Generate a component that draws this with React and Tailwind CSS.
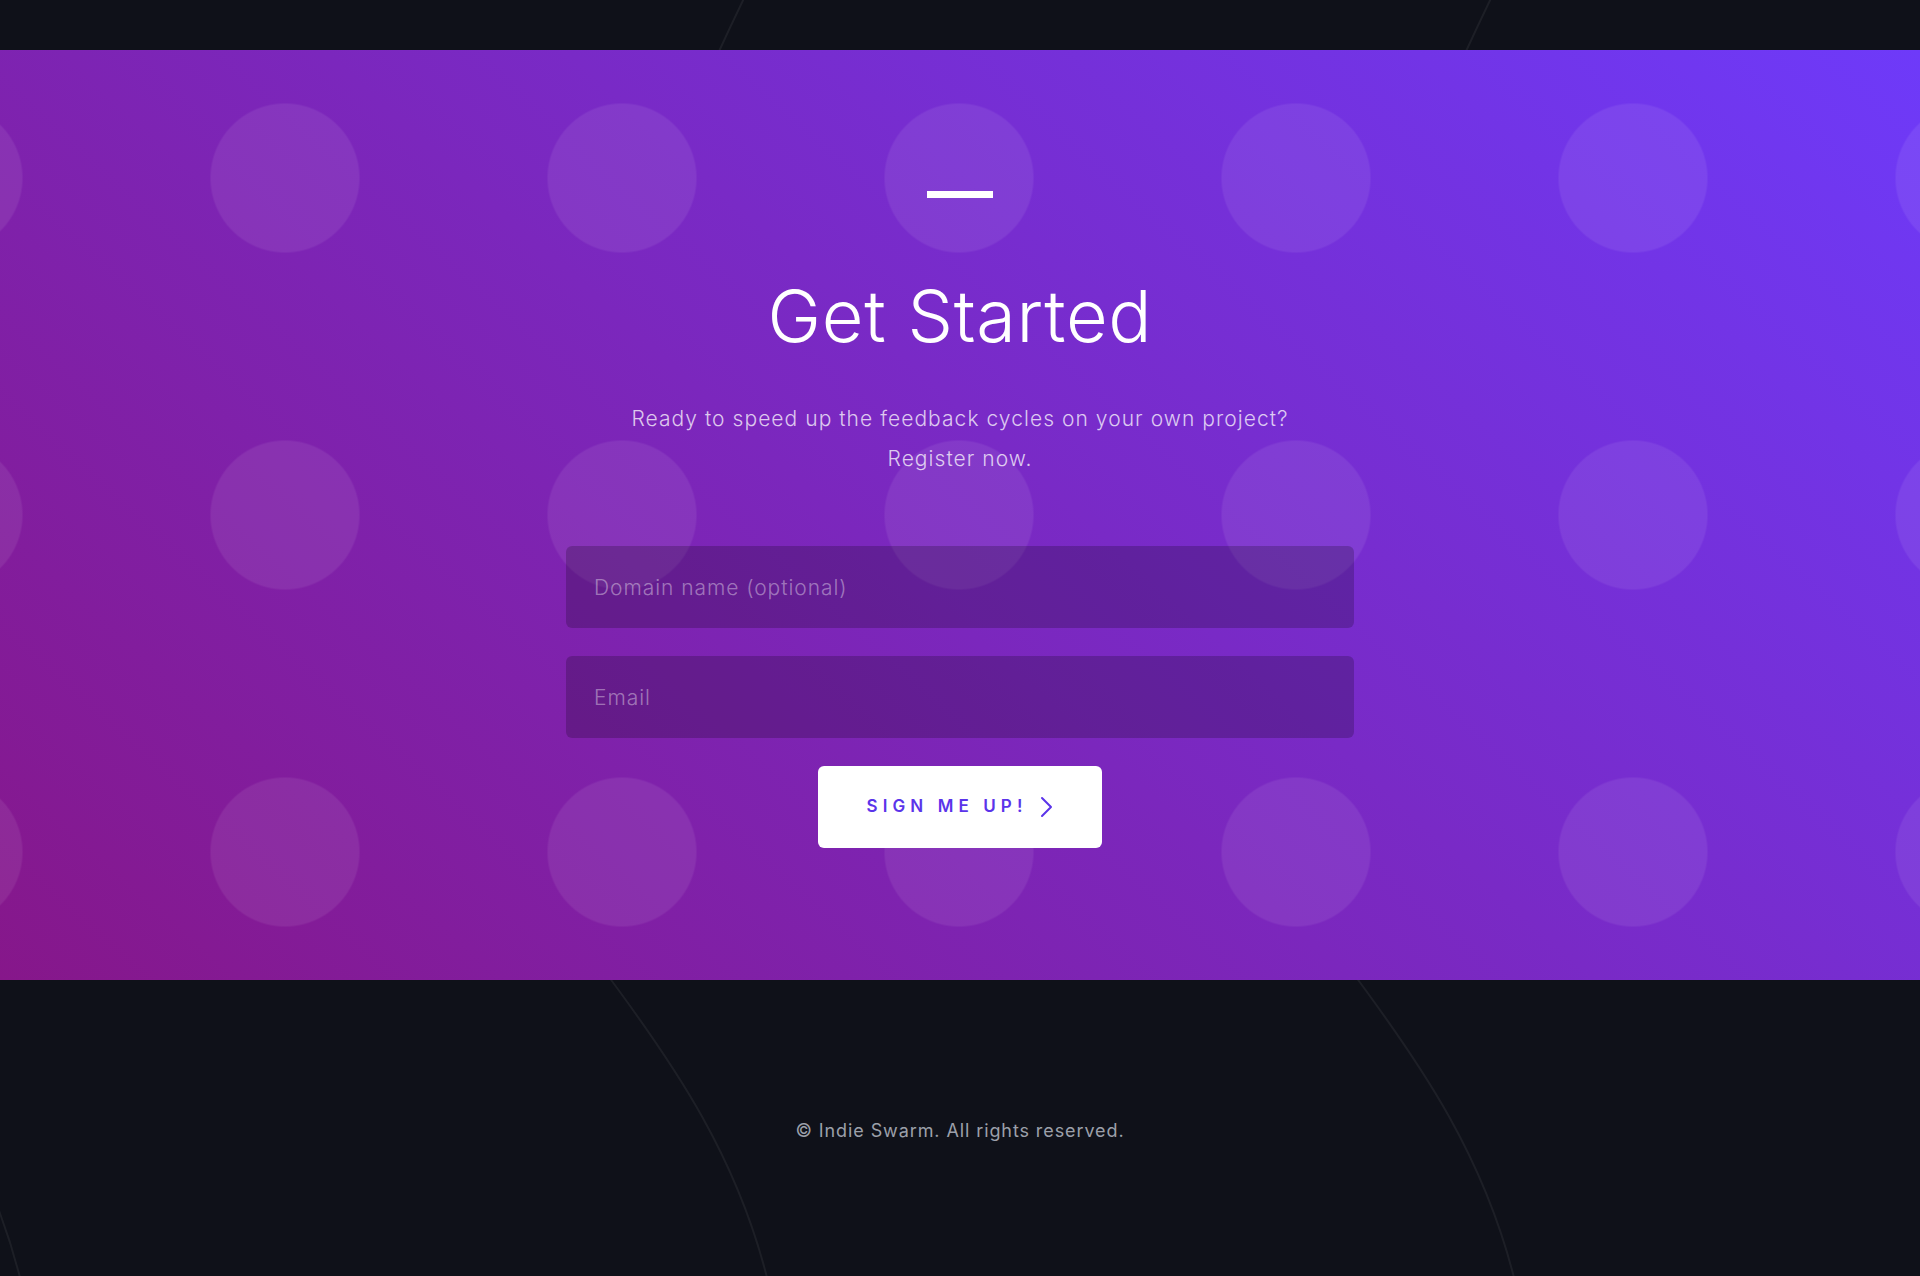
const arcs = [
  "M748 -10 Q731 25 715 60",
  "M1495 -10 Q1478 25 1462 60",
  "M600 965 C675 1065 740 1160 770 1290",
  "M1347 965 C1422 1065 1487 1160 1517 1290",
  "M-147 965 C-72 1065 -7 1160 23 1290",
]

const App = () => {
  return (
    <div className="relative min-h-screen overflow-hidden bg-[#0f1119] font-['Inter','Liberation_Sans',sans-serif]">
      {/* faint arcs behind the dark areas */}
      <svg className="absolute top-0 left-0 pointer-events-none" width="1920" height="1276">
        {arcs.map((d, i) => (
          <path key={i} d={d} fill="none" stroke="rgba(255,255,255,0.06)" strokeWidth="2" />
        ))}
      </svg>

      <div className="h-[50px]" />

      {/* Get started */}
      <section className="relative bg-[linear-gradient(42deg,#86178a,#6e3af9)]">
        <div className="absolute inset-0 pointer-events-none bg-[radial-gradient(circle,rgba(255,255,255,0.075)_74px,transparent_75px)] bg-[length:337px_337px] bg-[position:116.5px_-40.5px]" />

        <div className="relative flex flex-col items-center pt-[141px] pb-[132px]">
          <div className="w-[66px] h-[7px] bg-white" />

          <h1 className="mt-[82px] text-[72px] leading-none font-light tracking-[0.01em] text-white">
            Get Started
          </h1>

          <p className="mt-[47px] max-w-[740px] text-center text-[21px] leading-10 font-light tracking-[0.05em] text-white/75">
            Ready to speed up the feedback cycles on your own project? Register now.
          </p>

          <form className="mt-[67px] flex flex-col items-center gap-7" onSubmit={(e) => e.preventDefault()}>
            <input
              type="text"
              placeholder="Domain name (optional)"
              className="w-[788px] h-[82px] rounded-md bg-black/20 px-7 text-[21px] font-light tracking-[0.045em] text-white placeholder-white/40 outline-none"
            />
            <input
              type="email"
              placeholder="Email"
              className="w-[788px] h-[82px] rounded-md bg-black/20 px-7 text-[21px] font-light tracking-[0.045em] text-white placeholder-white/40 outline-none"
            />
            <button
              type="submit"
              className="w-[284px] h-[82px] rounded-md bg-white flex items-center justify-center gap-[13px] text-[#5b34ea] text-[17px] font-semibold tracking-[0.3em]"
            >
              <span>SIGN ME UP!</span>
              <svg width="13" height="22" viewBox="0 0 13 22" fill="none" stroke="currentColor" strokeWidth="2" strokeLinecap="round" strokeLinejoin="round">
                <polyline points="2,2 11,11 2,20" />
              </svg>
            </button>
          </form>
        </div>
      </section>

      {/* Footer */}
      <footer className="relative pt-[137px] pb-[131px] text-center">
        <p className="text-[18px] leading-7 tracking-[0.05em] text-[#9ca0aa]">© Indie Swarm. All rights reserved.</p>
      </footer>
    </div>
  )
}

export default App
